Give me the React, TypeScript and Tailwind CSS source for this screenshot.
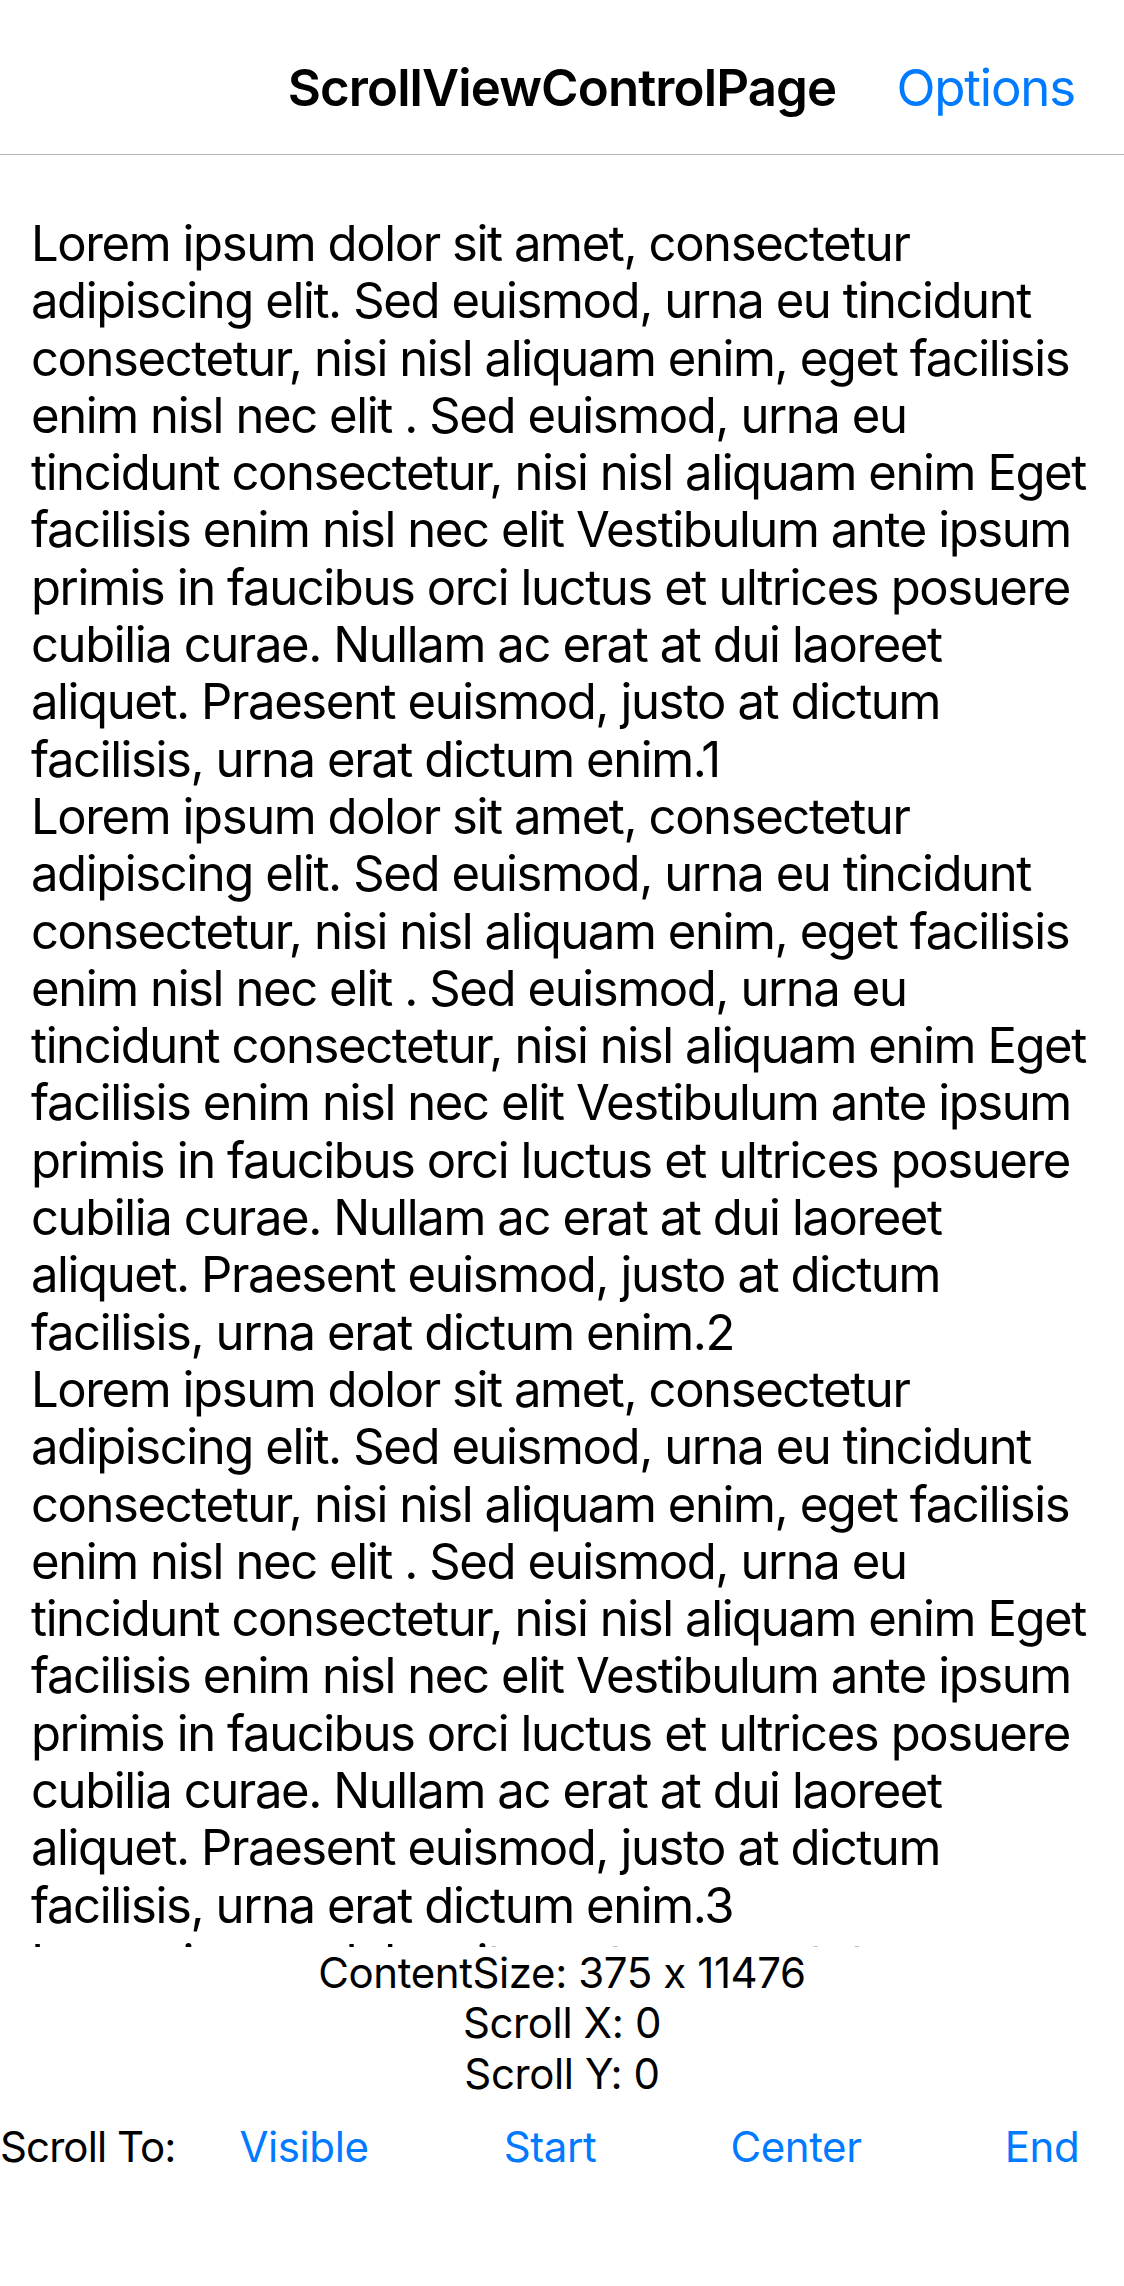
import * as React from "react";

const LINES = [
  "Lorem ipsum dolor sit amet, consectetur",
  "adipiscing elit. Sed euismod, urna eu tincidunt",
  "consectetur, nisi nisl aliquam enim, eget facilisis",
  "enim nisl nec elit . Sed euismod, urna eu",
  "tincidunt consectetur, nisi nisl aliquam enim Eget",
  "facilisis enim nisl nec elit Vestibulum ante ipsum",
  "primis in faucibus orci luctus et ultrices posuere",
  "cubilia curae. Nullam ac erat at dui laoreet",
  "aliquet. Praesent euismod, justo at dictum",
  "facilisis, urna erat dictum enim.",
];

const SCROLL_TARGETS = ["Visible", "Start", "Center", "End"];

// One label per item; line breaks follow the device render.
const Paragraph: React.FC<{ n: number }> = ({ n }) => (
  <div>
    {LINES.map((line, i) => (
      <div key={i} className="whitespace-nowrap">
        {line}
        {i === LINES.length - 1 ? n : null}
      </div>
    ))}
  </div>
);

export default function App() {
  return (
    <div className="w-[1124px] h-[2286px] bg-white text-black flex flex-col overflow-hidden font-['Inter','Liberation_Sans',sans-serif]">
      {/* nav bar */}
      <header className="h-[155px] shrink-0 border-b border-[#b4b4b4] grid grid-cols-[1fr_auto_1fr] items-start pt-[57px]">
        <div />
        <h1 className="text-[51px] leading-[61px] font-semibold tracking-[-0.9px]">
          ScrollViewControlPage
        </h1>
        <div className="flex justify-end pr-[49px]">
          <button className="text-[51px] leading-[61px] text-[#007aff] tracking-[-1.2px]">
            Options
          </button>
        </div>
      </header>

      {/* scroll view */}
      <main className="h-[1792px] shrink-0 overflow-hidden px-[31px] pt-[60px] text-[49px] leading-[57.3px] tracking-[-1.4px]">
        {[1, 2, 3, 4].map((n) => (
          <Paragraph key={n} n={n} />
        ))}
      </main>

      {/* status labels */}
      <section className="flex flex-col items-center pt-[2px] text-[42px] leading-[51px] tracking-[-0.4px]">
        <p className="leading-[48px]">ContentSize: 375 x 11476</p>
        <p>Scroll X: 0</p>
        <p>Scroll Y: 0</p>
      </section>

      <div className="flex items-start pt-[22px] text-[42px] leading-[51px] tracking-[-0.4px] overflow-hidden">
        <span className="w-[181px] shrink-0 whitespace-nowrap tracking-[-0.9px]">Scroll To:</span>
        {SCROLL_TARGETS.map((t) => (
          <button key={t} className="w-[246px] shrink-0 text-center text-[#007aff]">
            {t}
          </button>
        ))}
      </div>
    </div>
  );
}
